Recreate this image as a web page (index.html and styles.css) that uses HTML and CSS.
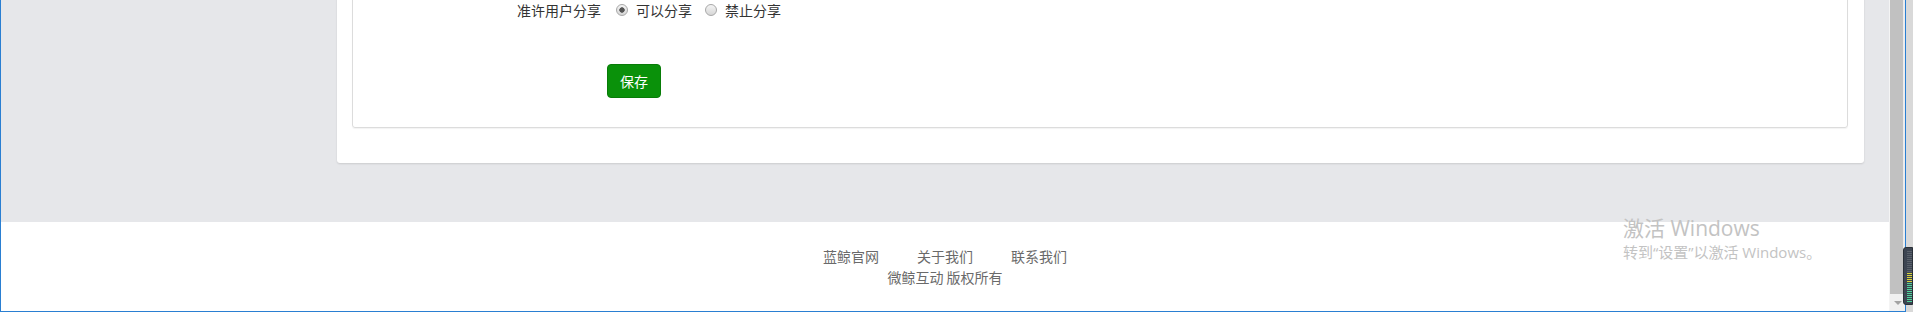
FILE: index.html
```html
<!DOCTYPE html>
<html lang="zh-CN">
<head>
<meta charset="utf-8">
<title>分享设置</title>
<link rel="stylesheet" href="styles.css">
</head>
<body>
<div class="screen">
  <div class="window">
    <div class="page">
      <div class="main">
        <div class="panel">
          <div class="box">
            <div class="form-row">
              <div class="form-label">准许用户分享</div>
              <div class="form-control">
                <label class="opt"><input type="radio" name="share" class="radio" checked>可以分享</label>
                <label class="opt"><input type="radio" name="share" class="radio">禁止分享</label>
              </div>
            </div>
            <div class="form-row form-actions">
              <div class="form-label"></div>
              <div class="form-control"><button type="button" class="btn-save">保存</button></div>
            </div>
          </div>
        </div>
      </div>
      <footer class="footer">
        <div class="links"><a class="link">蓝鲸官网</a><a class="link">关于我们</a><a class="link">联系我们</a></div>
        <div class="copy">微鲸互动 版权所有</div>
      </footer>
    </div>
    <div class="scrollbar">
      <div class="thumb"></div>
      <div class="arrow"><span class="tri"></span></div>
    </div>
  </div>
  <div class="watermark">
    <div class="wm-title">激活 Windows</div>
    <div class="wm-sub">转到“设置”以激活 Windows。</div>
  </div>
  <div class="meter"></div>
</div>
</body>
</html>
```
FILE: styles.css
```css
html, body {
  margin: 0;
  padding: 0;
  width: 1913px;
  height: 312px;
  overflow: hidden;
  background: #d9d9d9;
  font-family: "Noto Sans CJK SC", "Microsoft YaHei", sans-serif;
}

.screen {
  position: relative;
  width: 1913px;
  height: 312px;
}

.window {
  display: flex;
  width: 1906px;
  height: 312px;
  box-sizing: border-box;
  border-left: 1px solid #2a7fd2;
  border-right: 1px solid #2a7fd2;
  border-bottom: 1px solid #2a7fd2;
  background: #fff;
}

.page {
  flex: 1;
  display: flex;
  flex-direction: column;
  overflow: hidden;
  min-width: 0;
}

.main {
  background: #e6e7ea;
  margin-top: -36px;
  padding: 0 25px 59px 336px;
}

.panel {
  background: #fff;
  border-radius: 3px;
  box-shadow: 0 1px 2px rgba(0, 0, 0, 0.12);
  padding: 15px 16px 35px 15px;
}

.box {
  border: 1px solid #dcdcdc;
  border-radius: 3px;
  box-shadow: 0 1px 1px rgba(0, 0, 0, 0.05);
  padding: 22px 0 29px;
}

.form-row {
  display: flex;
  align-items: center;
  height: 16px;
  font-size: 14px;
  line-height: 16px;
  color: #333;
}

.form-label {
  width: 254px;
  box-sizing: border-box;
  padding-right: 6px;
  text-align: right;
}

.form-control {
  display: flex;
  align-items: center;
}

.opt {
  display: inline-flex;
  align-items: center;
}

.opt:first-child {
  margin-left: 10px;
}

.opt + .opt {
  margin-left: 14px;
}

.radio {
  -webkit-appearance: none;
  appearance: none;
  box-sizing: border-box;
  width: 12px;
  height: 12px;
  margin: 0 8px 0 -1px;
  border: 1px solid #a8a8a8;
  border-radius: 50%;
  background: linear-gradient(#f4f4f4, #d6d6d6);
}

.radio:checked {
  background: radial-gradient(circle, #555 0 2.4px, transparent 3px), linear-gradient(#f4f4f4, #d6d6d6);
}

.form-actions {
  margin-top: 46px;
  height: 34px;
}

.btn-save {
  width: 54px;
  height: 34px;
  box-sizing: border-box;
  background: #0a910a;
  border: 1px solid #087c08;
  border-radius: 4px;
  color: #fff;
  font-family: "Noto Sans CJK SC", "Microsoft YaHei", sans-serif;
  font-size: 14px;
  line-height: 20px;
  padding: 0;
}

.footer {
  flex: 1;
  background: #fff;
  padding-top: 24px;
  text-align: center;
  font-size: 14px;
  line-height: 21px;
  color: #6a6a6a;
}

.links {
  display: flex;
  justify-content: center;
  gap: 38px;
}

.link {
  color: #6a6a6a;
  text-decoration: none;
}

.scrollbar {
  width: 16px;
  display: flex;
  flex-direction: column;
  background: #ececec;
  border-left: 1px solid #f4f4f4;
  box-sizing: border-box;
}

.thumb {
  flex: 1;
  background: #c1c1c1;
  margin: 0 2px 0 0;
}

.arrow {
  height: 17px;
  display: flex;
  align-items: center;
  justify-content: center;
  background: #f0f0f0;
}

.tri {
  width: 0;
  height: 0;
  border-left: 4px solid transparent;
  border-right: 4px solid transparent;
  border-top: 4px solid #a3a3a3;
}

.watermark {
  position: absolute;
  left: 1623px;
  top: 214px;
  color: #c3c3c3;
  font-family: "Open Sans", "Noto Sans CJK SC", sans-serif;
}

.wm-title {
  font-size: 21px;
  line-height: 28px;
}

.wm-sub {
  font-size: 15px;
  line-height: 20px;
}

.meter {
  position: absolute;
  left: 1903px;
  top: 247px;
  width: 10px;
  height: 58px;
  box-sizing: border-box;
  border-radius: 3px 0 0 3px;
  border: 1px solid #2a3038;
  background:
    repeating-linear-gradient(to bottom, transparent 0 1px, #3d4552 1px 2px) 3px 3px / 5px 52px no-repeat,
    linear-gradient(to bottom, #5a616b 0 40%, #d6d23a 40% 60%, #4fd39a 60% 100%) 3px 3px / 5px 52px no-repeat,
    #3d4552;
}
```
